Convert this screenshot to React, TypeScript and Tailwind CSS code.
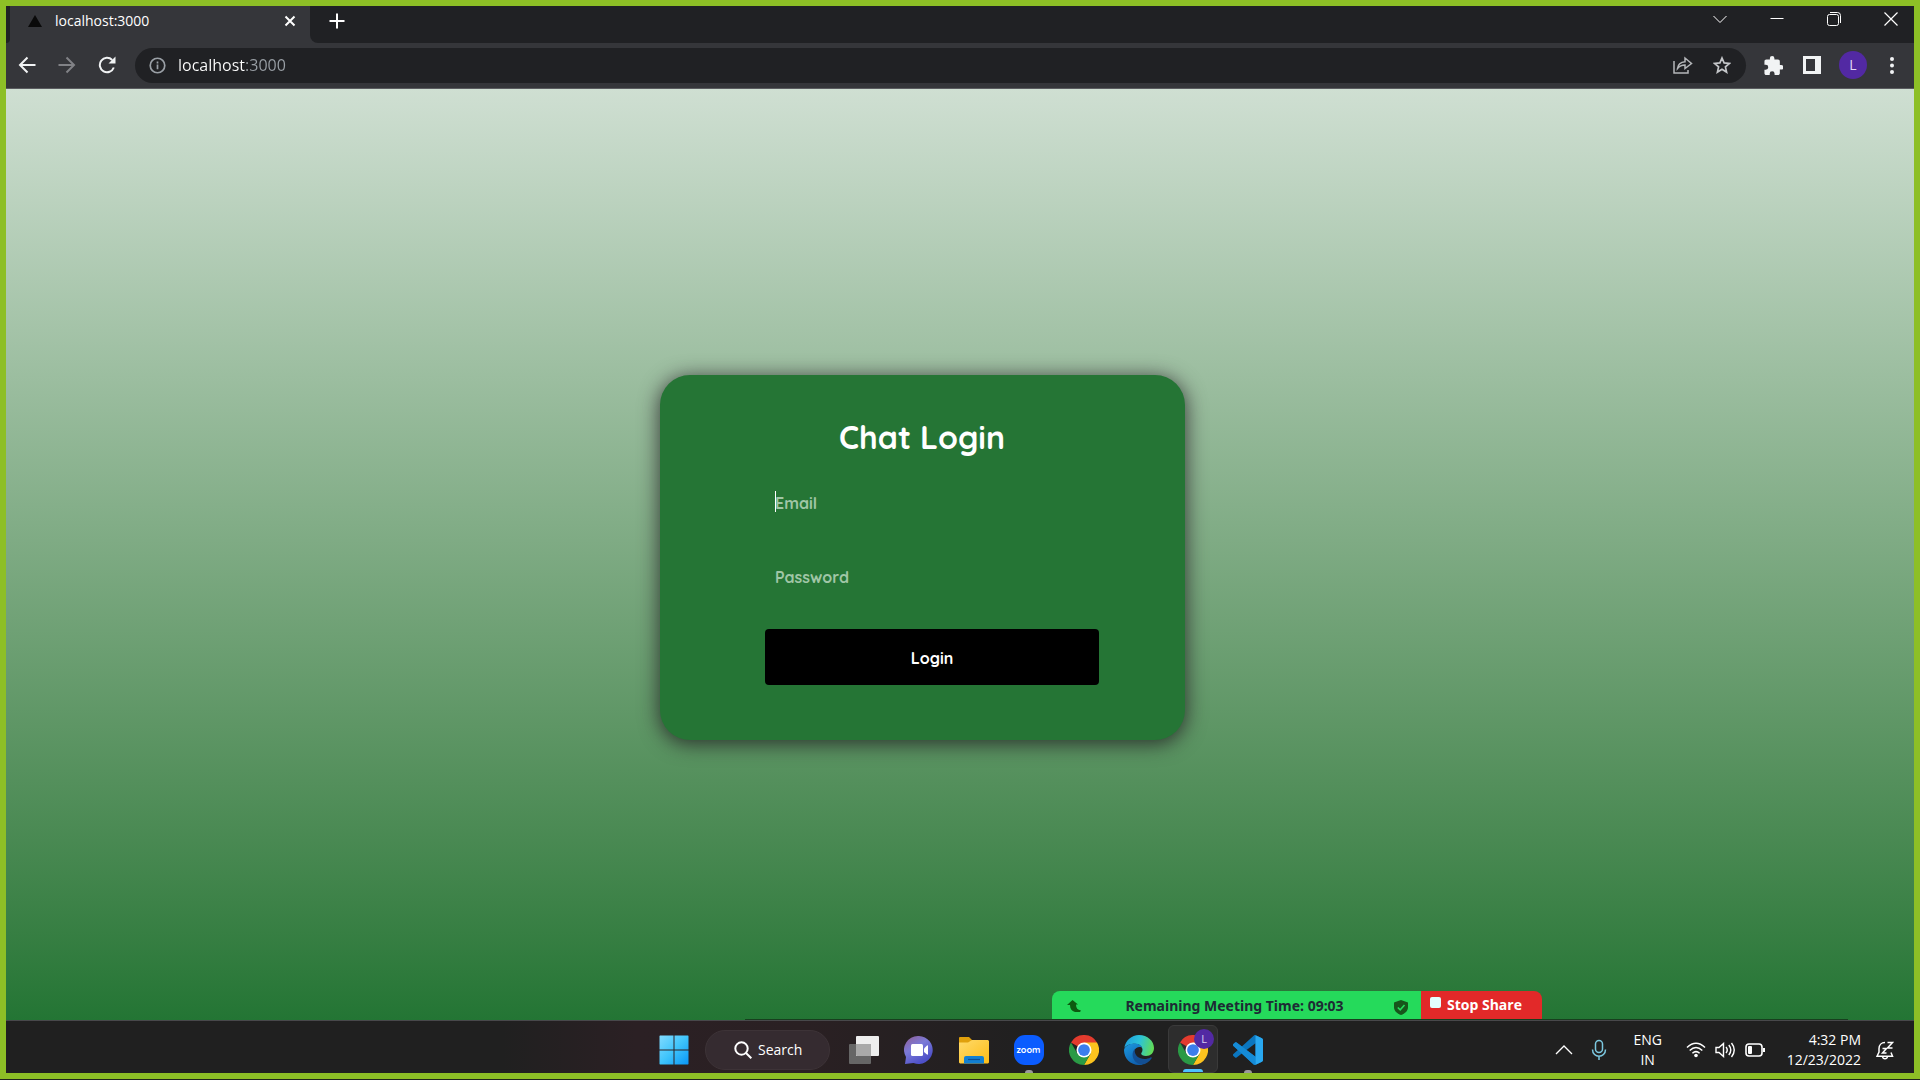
import { useId } from "react";

const UI = "font-['Open_Sans','Noto_Sans',sans-serif]";

function Chrome({ badge = false }: { badge?: boolean }) {
  return (
    <span className="relative block size-[30px]">
      <svg viewBox="0 0 48 48" className="size-full" aria-hidden="true">
        <path d="M24 24 3.2 12A24 24 0 0 1 44.8 12Z" fill="#e33b2e" />
        <path d="M24 12H44.8A24 24 0 0 1 24 48L34.4 30Z" fill="#fcc31e" />
        <path d="M13.6 30 3.2 12A24 24 0 0 0 24 48L34.4 30Z" fill="#2a9a45" />
        <circle cx="24" cy="24" r="12" fill="#fff" />
        <circle cx="24" cy="24" r="9.4" fill="#3b7ded" />
      </svg>
      {badge && (
        <span className="absolute -top-[6px] left-4 flex size-5 items-center justify-center rounded-full bg-[#5229a3] text-[11px] text-[#d9cdf0]">
          L
        </span>
      )}
    </span>
  );
}

function WindowsLogo() {
  const g = useId();
  return (
    <svg viewBox="0 0 30 30" className="size-[30px]" aria-hidden="true">
      <defs>
        <linearGradient id={g} gradientUnits="userSpaceOnUse" x1="0" y1="0" x2="30" y2="30">
          <stop offset="0" stopColor="#84dcff" />
          <stop offset=".5" stopColor="#3fc4fb" />
          <stop offset="1" stopColor="#0794f6" />
        </linearGradient>
      </defs>
      <path fill={`url(#${g})`} d="M1 .5h13.500v14H.5V1zM15.500.500H29l.5.5v13.500h-14zM.5 15.500h14v14H1l-.5-.5zM15.500 15.500h14V29l-.5.500H15.500z" />
    </svg>
  );
}

function TaskView() {
  return (
    <svg viewBox="0 0 30 30" className="size-[30px]" aria-hidden="true">
      <rect x="0" y="9" width="22" height="20" rx="1" fill="#666" />
      <rect x="7" y="1" width="23" height="20" rx="1" fill="#eee" />
      <path d="M7 9h15v12H8l-1-1z" fill="#a9a9a9" />
    </svg>
  );
}

function Chat() {
  const g = useId();
  return (
    <svg viewBox="0 0 30 30" className="size-[30px]" aria-hidden="true">
      <defs>
        <linearGradient id={g} x1="0" y1="0.2" x2="0.5" y2="1">
          <stop offset="0" stopColor="#8a66a8" />
          <stop offset=".4" stopColor="#7b7ad8" />
          <stop offset="1" stopColor="#4e50c8" />
        </linearGradient>
      </defs>
      <path fill={`url(#${g})`} d="M15 1a14 14 0 1 1-5.500 27L1 29l1-7A14 14 0 0 1 15 1z" />
      <rect x="7" y="9" width="12" height="12" rx="1.500" fill="#fff" />
      <path d="M20 13.500 23 10.500q1-.5 1 .5v8q0 1-1 .5L20 17z" fill="#fff" />
    </svg>
  );
}

function Folder() {
  const g = useId();
  return (
    <svg viewBox="0 0 30 30" className="size-[30px]" aria-hidden="true">
      <defs>
        <linearGradient id={g} x1="0" y1="0" x2="1" y2="1">
          <stop offset="0" stopColor="#ffda6b" />
          <stop offset="1" stopColor="#fdbd16" />
        </linearGradient>
      </defs>
      <path d="M0 3q0-1 1-1h9l3 3v5H0z" fill="#e0a00c" />
      <path fill={`url(#${g})`} d="M0 7.500h9L13 5h16l1 1v21.500l-1 1H1l-1-1z" />
      <path d="M5 28.500V23q0-2 2-2h16q2 0 2 2v5.500z" fill="#1280d2" />
      <path d="M9 24.500h12" stroke="#0b4f96" strokeWidth="1.200" />
    </svg>
  );
}

function Zoom() {
  return (
    <span className="flex size-[30px] items-center justify-center rounded-[11px] bg-[#0b5cff]">
      <span className="pb-0.5 text-[9px] leading-none font-bold text-white font-['Quicksand','Lato',sans-serif]">zoom</span>
    </span>
  );
}

function Edge() {
  const a = useId();
  const b = useId();
  return (
    <svg viewBox="0 0 30 30" className="size-[30px]" aria-hidden="true">
      <defs>
        <linearGradient id={a} x1="0" y1="0.3" x2="1" y2="0.5">
          <stop offset="0" stopColor="#1e9fe0" />
          <stop offset=".5" stopColor="#2cc3d8" />
          <stop offset="1" stopColor="#62dc55" />
        </linearGradient>
        <linearGradient id={b} x1="0" y1="0" x2="0.6" y2="1">
          <stop offset="0" stopColor="#1c9ae0" />
          <stop offset="1" stopColor="#0f5fae" />
        </linearGradient>
      </defs>
      <path fill={`url(#${a})`} d="M.3 13C1.500 5.500 7.500 0 15 0c8.500 0 15 6 15 13 0 5-3.500 8-8 8-3 0-4.800-1-4.800-2.200 0-1 1.300-1.500 1.300-4 0-3-3-6-7.500-6C5.500 8.800 1.500 11 .3 13z" />
      <path fill={`url(#${b})`} d="M0 15c.5-3.500 5-6.500 10.500-6.500 4 0 7 2 7.800 4.500-1.500-1.800-6.800-1.500-8.300 3C8.300 22 12.500 28 19 29.400 17.800 29.800 16.500 30 15 30 6.500 30 0 23.500 0 15z" />
      <path fill="#134f93" d="M10.800 14C6 19 9.500 29 18 29.600c4-.6 7.500-3 9.500-6.200.5-.9-.2-1.400-1-1C20 26 9.500 23 10.800 14z" />
    </svg>
  );
}

function VSCode() {
  return (
    <svg viewBox="0 0 100 100" className="size-[30px]" aria-hidden="true">
      <path
        d="M70.9 99.3a6.2 6.2 0 0 0 5-.2l20.500-9.900a6.200 6.200 0 0 0 3.600-5.600V16.400c0-2.400-1.400-4.600-3.600-5.600L75.900.9a6.200 6.200 0 0 0-7.100 1.200L29.400 38 12.200 25a4.200 4.200 0 0 0-5.300.2l-5.500 5.100a4.200 4.200 0 0 0 0 6.200L16.300 50 1.400 63.600a4.200 4.200 0 0 0 0 6.200l5.500 5a4.200 4.200 0 0 0 5.300.2L29.400 62l39.400 36a6.200 6.200 0 0 0 2.100 1.300zM75 27.300 45.100 50 75 72.700z"
        fill="#0b76bf"
        fillRule="evenodd"
      />
      <path d="M12.200 25a4.200 4.200 0 0 0-5.300.2l-5.500 5.100a4.200 4.200 0 0 0 0 6.200L68.800 98q3 2 6.200 1.300V72.700z" fill="#158bd6" />
      <path d="m75 .6 21.400 10.200q3.600 2 3.600 5.600v67.200q0 3.600-3.600 5.600L75 99.400z" fill="#29a8f0" />
    </svg>
  );
}

const apps = [
  { name: "Task View", icon: <TaskView />, mark: "" },
  { name: "Chat", icon: <Chat />, mark: "" },
  { name: "File Explorer", icon: <Folder />, mark: "" },
  { name: "Zoom", icon: <Zoom />, mark: "w-2 bg-[#9a9a9a]" },
  { name: "Chrome", icon: <Chrome />, mark: "" },
  { name: "Edge", icon: <Edge />, mark: "" },
  { name: "Chrome, profile L", icon: <Chrome badge />, mark: "w-5 bg-[#4cc2ff]", active: true },
  { name: "Visual Studio Code", icon: <VSCode />, mark: "w-2 bg-[#9a9a9a]" },
];

function TabStrip() {
  return (
    <div className="flex h-[37px] shrink-0 bg-[#35363a]">
      <div className="w-1 rounded-br-lg bg-[#202124]" />
      <div className="flex w-[300px] items-center pr-3.5 pb-2 pl-[18px]">
        <svg viewBox="0 0 14 12" className="mt-px h-3 w-3.5" aria-hidden="true">
          <path d="M7 0 14 12H0z" fill="#0a0a0a" />
        </svg>
        <span className="ml-[13px] flex-1 text-sm text-white">localhost:3000</span>
        <button aria-label="Close tab" className="text-white">
          <svg viewBox="0 0 12 12" className="size-3" fill="none" stroke="currentColor" strokeWidth="2">
            <path d="m1.500 1.500 9 9m0-9-9 9" />
          </svg>
        </button>
      </div>
      <div className="flex min-w-0 flex-1 items-center rounded-bl-lg bg-[#202124] pb-2">
        <button aria-label="New tab" className="ml-[19px] text-white">
          <svg viewBox="0 0 16 16" className="size-4" fill="none" stroke="currentColor" strokeWidth="2">
            <path d="M8 .5v15M.5 8h15" />
          </svg>
        </button>
        <div className="ml-auto flex items-center gap-[43px] pr-4 pb-1 text-white">
          <button aria-label="Search tabs">
            <svg viewBox="0 0 14 14" className="size-3.5" fill="none" stroke="currentColor">
              <path d="m.5 4 6.500 6.500L13.500 4" />
            </svg>
          </button>
          <button aria-label="Minimize">
            <svg viewBox="0 0 14 14" className="size-3.5" fill="none" stroke="currentColor">
              <path d="M.5 6.500h13" />
            </svg>
          </button>
          <button aria-label="Restore">
            <svg viewBox="0 0 14 14" className="size-3.5" fill="none" stroke="currentColor">
              <rect x=".5" y="2.500" width="11" height="11" rx="2" />
              <path d="M3 .5h7.500a3 3 0 0 1 3 3V11" />
            </svg>
          </button>
          <button aria-label="Close window">
            <svg viewBox="0 0 14 14" className="size-3.5" fill="none" stroke="currentColor" strokeWidth="1.200">
              <path d="m.5.500 13 13m0-13-13 13" />
            </svg>
          </button>
        </div>
      </div>
    </div>
  );
}

function Toolbar() {
  return (
    <div className="flex h-[46px] shrink-0 items-center border-b border-[#5b5c60] bg-[#35363a] pr-[19px] pb-px pl-3 text-[#f1f3f4]">
      <div className="flex gap-[22px]">
        <button aria-label="Back">
          <svg viewBox="0 0 18 18" className="size-[18px]" fill="none" stroke="currentColor" strokeWidth="2">
            <path d="M17.500 9H2.500M9.500 1.500 2 9l7.500 7.500" />
          </svg>
        </button>
        <button aria-label="Forward" className="text-[#818286]">
          <svg viewBox="0 0 18 18" className="size-[18px]" fill="none" stroke="currentColor" strokeWidth="2">
            <path d="M.5 9h15M8.500 1.500 16 9l-7.500 7.500" />
          </svg>
        </button>
        <button aria-label="Reload">
          <svg viewBox="0 0 18 18" className="size-[18px]" fill="none" stroke="currentColor" strokeWidth="2">
            <path d="M15.800 11.500A7.200 7.200 0 1 1 14.200 4" />
            <path d="M17.500.5v7h-7z" fill="currentColor" stroke="none" />
          </svg>
        </button>
      </div>
      <div className="ml-[19px] flex h-[35px] min-w-0 flex-1 items-center rounded-full bg-[#202124] pr-[15px] pl-3.5">
        <svg viewBox="0 0 18 18" className="size-[17px] shrink-0" fill="none" stroke="#9aa0a6" strokeWidth="1.800" aria-hidden="true">
          <circle cx="9" cy="9" r="7.700" />
          <path d="M9 8v5M9 4.800v2" />
        </svg>
        <input
          aria-label="Address"
          defaultValue="localhost:3000"
          className="ml-3 min-w-0 flex-1 bg-[linear-gradient(90deg,#fff_68px,#9aa0a6_68px)] bg-clip-text text-base leading-6 text-transparent outline-none"
        />
        <button aria-label="Share" className="text-[#b4b6b9]">
          <svg viewBox="0 0 20 18" className="h-[18px] w-5" fill="none" stroke="currentColor" strokeWidth="1.500">
            <path d="M1 5v12h14v-3" />
            <path d="M4.500 12.500C5 8 8 6 12 5.700V2l6.500 5.500L12 12.500V9c-3.500 0-5.500 1-7.500 3.500z" />
          </svg>
        </button>
        <button aria-label="Bookmark" className="ml-5 text-[#c4c6c9]">
          <svg viewBox="0 0 18 18" className="size-[18px]" fill="none" stroke="currentColor" strokeWidth="1.700">
            <path d="m9 2 2.100 4.900 5.300.5-4 3.500 1.200 5.200L9 13.300l-4.600 2.800 1.200-5.200-4-3.500 5.300-.5z" />
          </svg>
        </button>
      </div>
      <div className="ml-[18px] flex items-center">
        <button aria-label="Extensions">
          <svg viewBox="1.500 1 21 21" className="size-[19px]" fill="currentColor">
            <path d="M20.500 11H19V7c0-1.100-.9-2-2-2h-4V3.500a2.500 2.500 0 0 0-5 0V5H4c-1.100 0-2 .9-2 2v3.800h1.500a2.700 2.700 0 0 1 0 5.400H2V20c0 1.100.9 2 2 2h3.800v-1.500a2.700 2.700 0 0 1 5.400 0V22H17c1.100 0 2-.9 2-2v-4h1.500a2.500 2.500 0 0 0 0-5z" />
          </svg>
        </button>
        <button aria-label="Side panel" className="ml-5">
          <svg viewBox="0 0 18 18" className="size-[18px]" fill="currentColor" fillRule="evenodd">
            <path d="M0 0h18v18H0zM3 3v12h9V3z" />
          </svg>
        </button>
        <button aria-label="Profile" className="ml-[18px] flex size-7 items-center justify-center rounded-full bg-[#5229a3] text-sm text-[#e2d8f3]">
          L
        </button>
        <button aria-label="Menu" className="ml-[22px]">
          <svg viewBox="0 0 6 18" className="h-[18px] w-1.5" fill="currentColor">
            <circle cx="3" cy="3" r="2" />
            <circle cx="3" cy="9.500" r="2" />
            <circle cx="3" cy="16" r="2" />
          </svg>
        </button>
      </div>
    </div>
  );
}

function LoginCard() {
  return (
    <form
      onSubmit={(e) => e.preventDefault()}
      className="mt-1.5 mr-[75px] flex w-[525px] flex-col rounded-[30px] bg-[#257535] pt-10 pr-[86px] pb-[55px] pl-[105px] font-['Quicksand','Lato',sans-serif] text-base font-bold text-white shadow-[0_3px_20px_1px_rgba(30,20,30,0.75)]"
    >
      <h1 className="mr-5 text-center text-[32px] leading-[44px]">Chat Login</h1>
      <div className="relative mt-5 flex">
        <input aria-label="Email" type="email" placeholder="Email" className="h-12 w-full px-2.5 outline-none placeholder:text-[#a0c6a6]" />
        <span aria-hidden="true" className="absolute top-3 left-2.5 h-[21px] w-px bg-white" />
      </div>
      <input aria-label="Password" type="password" placeholder="Password" className="mt-[26px] h-12 w-full px-2.5 outline-none placeholder:text-[#a0c6a6]" />
      <button type="submit" className="mt-7 h-14 rounded bg-black pt-0.5">Login</button>
    </form>
  );
}

function MeetingBar() {
  return (
    <div className="absolute right-[372px] bottom-px flex h-7 overflow-hidden rounded-t-lg text-sm font-bold">
      <div className="flex w-[369px] items-center bg-[#25da5b] pr-[13px] pl-[15px] text-[#1d2b34]">
        <svg viewBox="0 0 14 12" className="mt-[2px] h-3 w-3.5" aria-hidden="true">
          <path fill="#0d5a10" d="M5.500 0 11 4.500H9C9 8 10.500 10 14 10.500L13 12H8C4.500 11 3 8.500 3 5H0z" />
        </svg>
        <span className="flex-1 pt-px pr-1.5 text-center font-['Noto_Sans',sans-serif]">Remaining Meeting Time: 09:03</span>
        <svg viewBox="0 0 14 15" className="mt-1 h-[15px] w-3.5" aria-hidden="true">
          <path d="M7 0 14 2.500V7c0 4-3 6.500-7 8-4-1.500-7-4-7-8V2.500z" fill="#17551b" />
          <path d="m3.800 7.500 2.400 2.300L10.500 5" fill="none" stroke="#25da5b" strokeWidth="1.600" />
        </svg>
      </div>
      <button className="flex w-[121px] bg-[#e22929] pl-[9px] text-white">
        <span className="mt-1.5 size-[11px] rounded-[2px] bg-[#e2ffff]" />
        <span className="ml-1.5 leading-7">Stop Share</span>
      </button>
    </div>
  );
}

function Taskbar() {
  return (
    <footer className="flex h-[53px] shrink-0 border-t border-[#48484b] bg-[linear-gradient(90deg,#202020_0,#202020_26%,#2b2024_33%,#2a2023_42%,#202020_54%)] text-white">
      <div className="flex-1" />
      <div className="flex items-center pl-[34px]">
        <button aria-label="Start" className="mt-1.5 mr-4"><WindowsLogo /></button>
        <button className="mt-1.5 mr-1.5 flex h-10 w-[125px] items-center rounded-full border border-[#3d3337] bg-[#352b30] pl-7">
          <svg viewBox="0 0 18 18" className="size-[18px]" fill="none" stroke="currentColor" strokeWidth="2" aria-hidden="true">
            <circle cx="7.500" cy="7.500" r="6.200" />
            <path d="m12 12 5.300 5.300" />
          </svg>
          <span className="ml-1.5 text-sm">Search</span>
        </button>
        {apps.map((a) => (
          <button
            key={a.name}
            aria-label={a.name}
            className={
              a.active
                ? "relative mx-[2px] mt-1 flex h-12 w-[50px] items-center justify-center rounded-md border border-[#3a3a3a] bg-[#2d2d2d] pt-0.5"
                : "relative mx-[2px] mt-1 flex h-12 w-[51px] items-center justify-center pt-0.5"
            }
          >
            {a.icon}
            {a.mark && <span className={`absolute bottom-0 h-[3px] rounded-t-sm ${a.mark}`} />}
          </button>
        ))}
      </div>
      <div className="flex flex-1 items-center justify-end pt-1.5 pr-5">
        <button aria-label="Hidden icons">
          <svg viewBox="0 0 18 10" className="h-2.5 w-[18px]" fill="none" stroke="currentColor" strokeWidth="1.300">
            <path d="m1 9 8-8 8 8" />
          </svg>
        </button>
        <button aria-label="Microphone" className="ml-[18px] text-[#7cc8e0]">
          <svg viewBox="0 0 16 22" className="h-[22px] w-4" fill="none" stroke="currentColor" strokeWidth="1.500">
            <rect x="4.500" y="1.500" width="7" height="12" rx="3.500" />
            <path d="M1.500 10.500c0 9 13 9 13 0M8 17.500V21" />
          </svg>
        </button>
        <button className="ml-[23px] w-9 text-center text-sm leading-5">
          ENG
          <br />
          IN
        </button>
        <button aria-label="Network, volume and battery" className="ml-5 flex items-center gap-[9px]">
          <svg viewBox="0 0 20 16" className="h-4 w-5" fill="none" stroke="currentColor" strokeWidth="1.500">
            <path d="M1 5.500q9-8.500 18 0M3.700 8.500q6.300-6 12.600 0M6.400 11.300q3.600-3.400 7.200 0" />
            <circle cx="10" cy="13.500" r="1.800" fill="currentColor" stroke="none" />
          </svg>
          <svg viewBox="0 0 21 16" className="h-4 w-[21px]" fill="none" stroke="currentColor" strokeWidth="1.400">
            <path d="M1 5.500h3L8.500 1.500v13L4 10.500H1zM11 5q2.500 3 0 6M13.800 3q4 5 0 10M16.500 1q5.500 7 0 14" />
          </svg>
          <svg viewBox="0 0 20 14" className="h-3.5 w-5" fill="none" stroke="currentColor" strokeWidth="1.600">
            <rect x="1" y="1" width="16" height="12" rx="3" />
            <rect x="3" y="3" width="4" height="8" rx="1" fill="currentColor" stroke="none" />
            <path d="M19 5v4" strokeWidth="2" />
          </svg>
        </button>
        <button className="ml-[22px] text-right text-sm leading-5">
          4:32 PM
          <br />
          12/23/2022
        </button>
        <button aria-label="Notifications" className="ml-[15px]">
          <svg viewBox="0 0 18 19" className="h-[19px] w-[18px]" fill="none" stroke="currentColor" strokeWidth="1.500">
            <path d="M9 1.500C5.500 1.500 3 4 3 7.500V11l-2 4.300h15.500L15 11.500M6.500 15.500c.5 3 4.500 3 5 0" />
            <path d="M11.500 1.500h5l-5 5.500h5M6.500 7.500h4l-4 4.500h4" />
          </svg>
        </button>
      </div>
    </footer>
  );
}

export default function App() {
  return (
    <div className="h-screen bg-[#20241c] pb-px">
      <div className={`flex h-full flex-col border-6 border-[#8dbf26] ${UI}`}>
        <TabStrip />
        <Toolbar />
        <main className="relative flex min-h-0 flex-1 flex-col items-center justify-center bg-linear-to-b from-[#cfdfd2] to-[#237534]">
          <LoginCard />
          <div className="absolute right-[66px] bottom-0 left-[739px] h-px bg-[#173f1e]" />
          <MeetingBar />
        </main>
        <Taskbar />
      </div>
    </div>
  );
}
